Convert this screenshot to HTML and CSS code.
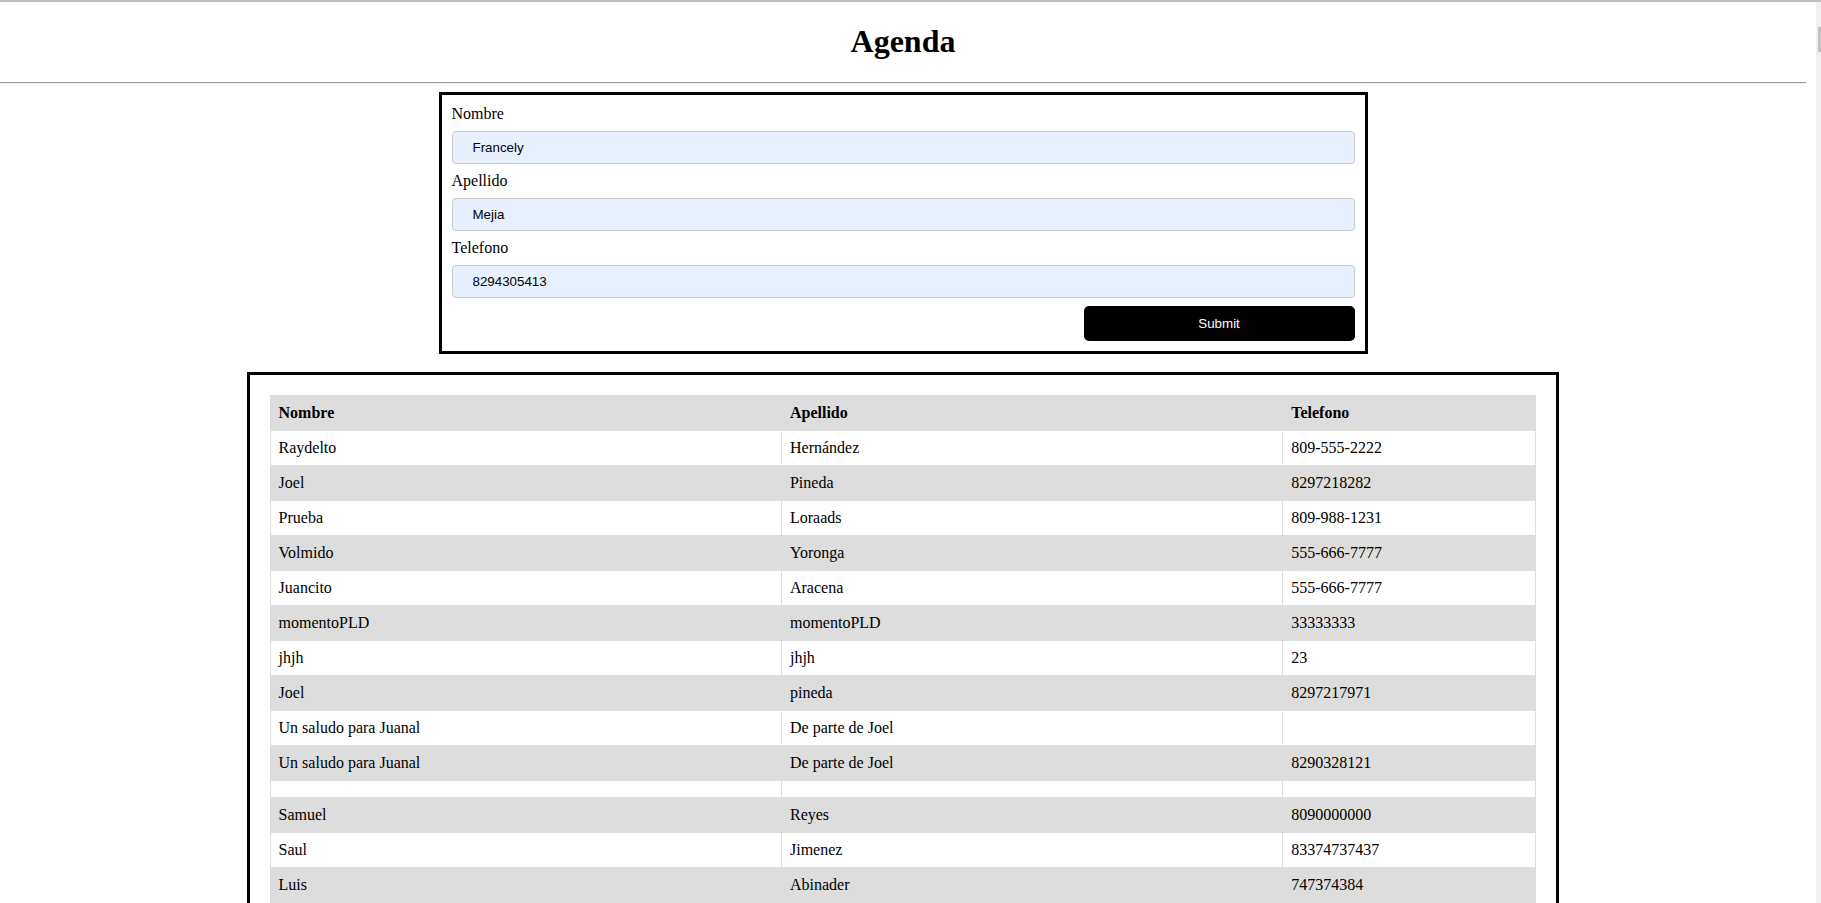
FILE: index.html
```html
<!DOCTYPE html>
<html lang="es">
<head>
<meta charset="utf-8">
<title>Agenda</title>
<link rel="stylesheet" href="styles.css">
</head>
<body>
<h1 class="title">Agenda</h1>
<hr class="divider">
<form class="form-card">
  <label class="field-label" for="nombre">Nombre</label>
  <input class="field-input" id="nombre" type="text" value="Francely">
  <label class="field-label" for="apellido">Apellido</label>
  <input class="field-input" id="apellido" type="text" value="Mejia">
  <label class="field-label" for="telefono">Telefono</label>
  <input class="field-input" id="telefono" type="text" value="8294305413">
  <button class="submit-btn" type="button">Submit</button>
</form>
<div class="table-card">
  <table class="contacts">
    <colgroup>
      <col class="col-nombre">
      <col class="col-apellido">
      <col class="col-telefono">
    </colgroup>
    <thead>
      <tr><th>Nombre</th><th>Apellido</th><th>Telefono</th></tr>
    </thead>
    <tbody>
      <tr><td>Raydelto</td><td>Hernández</td><td>809-555-2222</td></tr>
      <tr><td>Joel</td><td>Pineda</td><td>8297218282</td></tr>
      <tr><td>Prueba</td><td>Loraads</td><td>809-988-1231</td></tr>
      <tr><td>Volmido</td><td>Yoronga</td><td>555-666-7777</td></tr>
      <tr><td>Juancito</td><td>Aracena</td><td>555-666-7777</td></tr>
      <tr><td>momentoPLD</td><td>momentoPLD</td><td>33333333</td></tr>
      <tr><td>jhjh</td><td>jhjh</td><td>23</td></tr>
      <tr><td>Joel</td><td>pineda</td><td>8297217971</td></tr>
      <tr><td>Un saludo para Juanal</td><td>De parte de Joel</td><td></td></tr>
      <tr><td>Un saludo para Juanal</td><td>De parte de Joel</td><td>8290328121</td></tr>
      <tr><td></td><td></td><td></td></tr>
      <tr><td>Samuel</td><td>Reyes</td><td>8090000000</td></tr>
      <tr><td>Saul</td><td>Jimenez</td><td>83374737437</td></tr>
      <tr><td>Luis</td><td>Abinader</td><td>747374384</td></tr>
    </tbody>
  </table>
</div>
<div class="scroll-track" aria-hidden="true"><div class="scroll-thumb"></div></div>
</body>
</html>
```
FILE: styles.css
```css
html {
  background: #fff;
}

body {
  margin: 0;
  padding-right: 15px;
  border-top: 2px solid #c0c0c0;
  font-family: "Liberation Serif", "Times New Roman", serif;
  font-size: 16px;
  color: #000;
}

.title {
  margin: 21.44px 0;
  font-size: 32px;
  font-weight: bold;
  text-align: center;
}

.divider {
  margin: 8px 0;
  border: 0;
  border-top: 1px solid #9d9d9d;
  border-bottom: 1px solid #eeeeee;
  height: 0;
}

.form-card {
  width: 50%;
  margin: 0 auto;
  padding: 10px;
  border: 3px solid #000;
  display: flex;
  flex-direction: column;
  gap: 8px;
}

.field-label {
  display: block;
}

.field-input {
  box-sizing: border-box;
  width: 100%;
  height: 33px;
  margin: 0;
  padding: 0 20px;
  border: 1px solid #c9c9c9;
  border-radius: 4px;
  background: #e8f0fe;
  font-family: "Liberation Sans", Arial, sans-serif;
  font-size: 13.33px;
  color: #000;
}

.submit-btn {
  align-self: flex-end;
  width: 30%;
  height: 35px;
  margin: 0;
  border: 0;
  border-radius: 5px;
  background: #000;
  color: #fff;
  font-family: "Liberation Sans", Arial, sans-serif;
  font-size: 13.33px;
}

.table-card {
  width: 70.15%;
  margin: 18px auto 0;
  padding: 20px;
  border: 3px solid #000;
}

.contacts {
  width: 100%;
  border-collapse: collapse;
}

.col-nombre { width: 40.4%; }
.col-apellido { width: 39.6%; }
.col-telefono { width: 20%; }

.contacts th,
.contacts td {
  padding: 8px;
  border: 1px solid #dddddd;
  text-align: left;
  font-size: 16px;
}

.contacts th {
  font-weight: bold;
}

.contacts thead tr,
.contacts tbody tr:nth-child(even) {
  background: #dddddd;
}

.scroll-track {
  position: fixed;
  top: 2px;
  right: 0;
  bottom: 0;
  width: 5px;
  background: #f0f0f0;
}

.scroll-thumb {
  margin: 25px 0 0 2px;
  width: 3px;
  height: 25px;
  background: #c1c1c1;
}
```
